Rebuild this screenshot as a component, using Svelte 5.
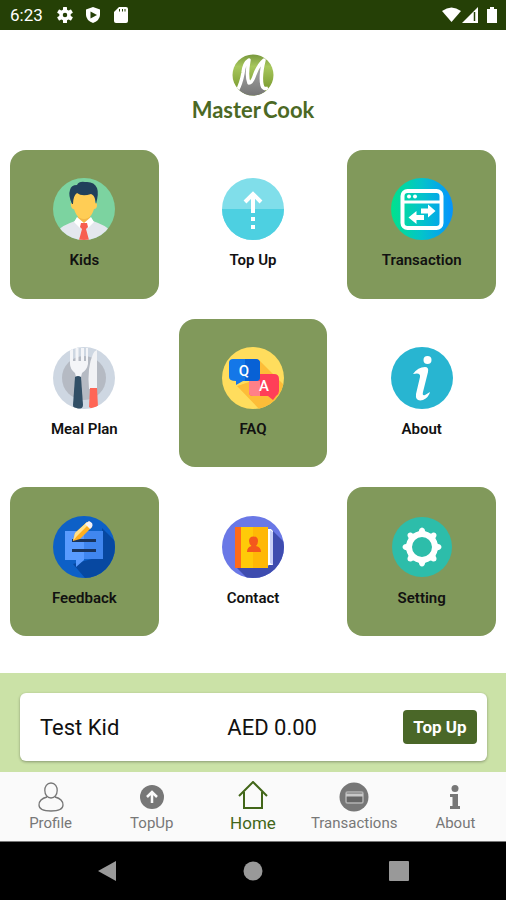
<script>
  const tiles = [
    { id: 'kids', label: 'Kids', filled: true },
    { id: 'topup', label: 'Top Up', filled: false },
    { id: 'transaction', label: 'Transaction', filled: true },
    { id: 'meal', label: 'Meal Plan', filled: false },
    { id: 'faq', label: 'FAQ', filled: true },
    { id: 'about', label: 'About', filled: false },
    { id: 'feedback', label: 'Feedback', filled: true },
    { id: 'contact', label: 'Contact', filled: false },
    { id: 'setting', label: 'Setting', filled: true }
  ];
  const tabs = [
    { id: 'profile', label: 'Profile' },
    { id: 'topup', label: 'TopUp' },
    { id: 'home', label: 'Home' },
    { id: 'transactions', label: 'Transactions' },
    { id: 'about', label: 'About' }
  ];
  const octants = [0, 45, 90, 135, 180, 225, 270, 315];
  const sextants = [0, 60, 120, 180, 240, 300];
  let active = $state('home');
</script>

{#snippet tileIcon(id)}
  <svg class="tile-icon" viewBox="0 0 62 62" aria-hidden="true">
    <defs>
      <clipPath id="clip-{id}"><circle cx="31" cy="31" r="31" /></clipPath>
      <linearGradient id="sweep" x1="0" x2="1" y1="0" y2="0">
        <stop offset="0" stop-color="#00e38c" />
        <stop offset="0.5" stop-color="#04c3cb" />
        <stop offset="1" stop-color="#0593ff" />
      </linearGradient>
    </defs>
    <g clip-path="url(#clip-{id})">
      {#if id === 'kids'}
        <rect width="62" height="62" fill="#7cd3a0" />
        <path d="M6 62V52Q8 48 22 43L31 48L40 43Q54 48 56 52V62Z" fill="#e4e7ee" />
        <path d="M25 36H37V42L31 47L25 42Z" fill="#f3b846" />
        <path d="M20 25Q17 24 18 28Q19 32 21 31Q23 38 27 40Q31 42 35 40Q39 38 41 31Q44 31 44 27Q44 24 42 25V14H20Z" fill="#ffcd55" />
        <path d="M19 26Q15 17 17 12Q18 7 24 7Q26 3 32 4Q41 3 44 10Q46 15 43 26L42 21Q41 17 38 16Q29 19 24 15Q20 18 20 26Z" fill="#21405b" />
        <path d="M24 39L31 45L27 50L21 44ZM38 39L31 45L35 50L41 44Z" fill="#fff" />
        <path d="M28 45H34L35 49L33 51L36 62H26L29 51L27 49Z" fill="#f75e4f" />
      {:else if id === 'topup'}
        <rect width="62" height="62" fill="#80deea" />
        <rect y="31" width="62" height="31" fill="#4dd0e1" />
        <path d="M31 35V15M23 24L31 16L39 24" fill="none" stroke="#fff" stroke-width="4" />
        <path d="M29 39h4v4h-4zM29 47h4v4h-4z" fill="#fff" />
      {:else if id === 'transaction'}
        <rect width="62" height="62" fill="url(#sweep)" />
        <rect x="11.500" y="13" width="39" height="37" rx="5" fill="none" stroke="#fff" stroke-width="4" />
        <path d="M11 24H51" stroke="#fff" stroke-width="3" />
        <circle cx="18" cy="18.500" r="2" fill="#fff" />
        <circle cx="24" cy="18.500" r="2" fill="#fff" />
        <path d="M30 30.500H37V26.500L44.500 33L37 39.500V35.500H30ZM33 37H25.500V33L17.500 39.500L25.500 46V42H33Z" fill="#fff" />
      {:else if id === 'meal'}
        <rect width="62" height="62" fill="#ced7e2" />
        <circle cx="31" cy="31" r="22" fill="#b5bac3" />
        <path d="M17 1h3v13h2.500V1h3v13h2.500V1h3v13h2V1h2V17Q34 23 29 26L28 30H23L22 26Q17 22 17 17Z" fill="#f4f5f8" />
        <path d="M36 42Q34 20 40 7Q41 4 44 3V42Z" fill="#f1f2f5" />
        <path d="M22 30Q25 28 28 30L30 58Q30 62 25 62Q20 62 20 58Z" fill="#314f66" />
        <path d="M37 41H44L45 60Q41 64 36 60Z" fill="#ff6656" />
      {:else if id === 'faq'}
        <rect width="62" height="62" fill="#ffdd5d" />
        <path d="M36 12L62 38V62H37L15 39L30 34Z" fill="#fdbd38" />
        <path d="M31 27H52Q57 27 57 32V44Q57 47 54 49L51 53L46 49H31Q27 49 27 45V32Q27 27 31 27Z" fill="#ff3e58" />
        <path d="M27 34H38V49H31Q27 49 27 45Z" fill="#ff8088" />
        <path d="M11 12H33Q38 12 38 16V30Q38 34 34 34H21L14 38V34Q7 34 7 30V16Q7 12 11 12Z" fill="#1477e8" />
        <path d="M23 12H33Q38 12 38 16V30Q38 34 34 34H23Z" fill="#0861d5" />
        <text x="22" y="29" class="bubble">Q</text>
        <text x="42" y="44" class="bubble">A</text>
      {:else if id === 'about'}
        <rect width="62" height="62" fill="#28b5d1" />
        <circle cx="36.500" cy="13" r="4" fill="#fff" />
        <path d="M22 27Q27 20 34 20Q38 20 37 25L32 45Q31 49 34 48L39 45Q38 50 32 53Q24 55 25 47L29 30Q30 25 22 27Z" fill="#fff" />
      {:else if id === 'feedback'}
        <rect width="62" height="62" fill="#0d60c7" />
        <path d="M49 12L62 25V62H32L20 48L50 40Z" fill="#0748a1" />
        <path d="M12 15H31V44L23 51V44H12Z" fill="#599bff" />
        <path d="M31 15H50V43H31Z" fill="#4086ef" />
        <path d="M19 24.500H43M19 34.500H43" stroke="#19345d" stroke-width="3" />
        <path d="M20 25L22 17L34 6L39 11L27 23Z" fill="#ffae1d" />
        <path d="M20 25L22 17L34 6L36 8L24 20Z" fill="#ffe18b" />
        <path d="M32 8L36 5Q41 7 39 11L37 13Z" fill="#f5f1f5" />
      {:else if id === 'contact'}
        <rect width="62" height="62" fill="#6a78e6" />
        <path d="M49 13L62 26V62H25L15 52L47 50Z" fill="#3e4caf" />
        <path d="M44 13H49L51 15V49H44Z" fill="#fff" />
        <path d="M48 14L51 16V49L48 47Z" fill="#c8cff7" />
        <rect x="13" y="11" width="33" height="41" fill="#ffca08" />
        <rect x="31" y="11" width="15" height="41" fill="#ffb806" />
        <rect x="13" y="11" width="6" height="41" fill="#ff6a1a" />
        <path d="M27 25Q27 20.500 31.500 20.500Q36 20.500 36 25Q36 28 34 30Q39 31 39 36H25Q25 31 29.500 30Q27 28 27 25Z" fill="#f4581c" />
      {:else}
        <circle cx="31" cy="31" r="30" fill="#2dbdaa" />
        <circle cx="31" cy="31" r="13" fill="none" stroke="#fff" stroke-width="6" />
        {#each octants as angle}
          <path d="M26 17.500Q28 16.500 28.500 13Q31 10 33.500 13Q34 16.500 36 17.500Z" fill="#fff" transform="rotate({angle} 31 31)" />
        {/each}
      {/if}
    </g>
  </svg>
{/snippet}

{#snippet tabIcon(id)}
  <svg class="tab-icon" viewBox="0 0 32 32" aria-hidden="true">
    {#if id === 'profile'}
      <path d="M16 2C7.500 2 8 17 16 17C24 17 24.500 2 16 2ZM12 16Q4 18 4 24Q4 30 16 30Q28 30 28 24Q28 18 20 16" fill="none" stroke="currentColor" stroke-width="1.300" />
    {:else if id === 'topup'}
      <circle cx="16" cy="16" r="12" fill="currentColor" />
      <path d="M16 22V12M11 16L16 11L21 16" fill="none" stroke="#fafafa" stroke-width="2.500" />
    {:else if id === 'home'}
      <path d="M2 15L16 1L30 15M7 11V27H25V11" fill="none" stroke="currentColor" stroke-width="2" />
    {:else if id === 'transactions'}
      <circle cx="16" cy="16" r="14.500" fill="currentColor" />
      <rect x="8" y="11" width="17" height="11" rx="1.500" fill="#666" stroke="#b2b2b2" stroke-width="1.500" />
      <path d="M8 14H25" stroke="#c8c8c8" stroke-width="3" />
    {:else}
      <circle cx="16" cy="7.500" r="3.500" fill="currentColor" />
      <path d="M11 13H19V25H21V28H11V25H13.500V16H11Z" fill="currentColor" />
    {/if}
  </svg>
{/snippet}

<div class="app">
  <div class="status">
    <span class="clock">6:23</span>
    <svg class="status-icon" viewBox="0 0 16 16" aria-hidden="true">
      <circle cx="8" cy="8" r="4" fill="none" stroke="#fff" stroke-width="3.500" />
      {#each sextants as angle}
        <rect x="6" y="0" width="4" height="4" rx="0.500" fill="#fff" transform="rotate({angle} 8 8)" />
      {/each}
    </svg>
    <svg class="status-icon" viewBox="0 0 16 16" aria-hidden="true">
      <path d="M8 0L15 2.500V8Q15 13 8 16Q1 13 1 8V2.500Z" fill="#fff" />
      <path d="M5.500 4.500L12 8L5.500 11.500Z" fill="#254006" />
    </svg>
    <svg class="status-icon" viewBox="0 0 16 16" aria-hidden="true">
      <path d="M6 0H13Q15 0 15 2V14Q15 16 13 16H3Q1 16 1 14V5Z" fill="#fff" />
      <path d="M6.500 2V4.500M9.500 2V4.500M12 2V4.500" stroke="#254006" stroke-width="1" />
    </svg>
    <svg class="signals" viewBox="0 0 56 18" aria-hidden="true">
      <path d="M0 5Q9.500 -2 19 5L9.500 16Z" fill="#fff" />
      <path d="M36 1V17H20Z" fill="#fff" />
      <path d="M32.500 6V15" stroke="#254006" stroke-width="1.500" />
      <path d="M46 3H48V1H52V3H55V17H45V3Z" fill="#fff" />
    </svg>
  </div>

  <header class="brand">
    <svg class="emblem" viewBox="0 0 42 42" aria-hidden="true">
      <defs>
        <linearGradient id="leaf" x1="0" y1="0" x2="0" y2="1">
          <stop offset="0" stop-color="#76963c" />
          <stop offset="0.300" stop-color="#a7c75c" />
          <stop offset="1" stop-color="#6f8f24" />
        </linearGradient>
        <linearGradient id="steel" x1="0" y1="0" x2="0" y2="1">
          <stop offset="0" stop-color="#ababab" />
          <stop offset="1" stop-color="#757575" />
        </linearGradient>
        <clipPath id="disc"><circle cx="21" cy="21" r="20.500" /></clipPath>
      </defs>
      <g clip-path="url(#disc)">
        <rect width="42" height="42" fill="url(#leaf)" />
        <path d="M4 42L7 34Q11 20 14 10L17 29L20 29L30 10L31 30L35 42Z" fill="url(#steel)" />
        <path d="M5 37Q9 30 11 19Q12 9 17 6Q14 22 17 29Q20 29 23 20Q27 10 32 6Q28 22 30 31Q31 36 36 34" fill="none" stroke="#fff" stroke-width="3.500" stroke-linejoin="round" />
      </g>
    </svg>
    <h1>Master<span>Cook</span></h1>
  </header>

  <main class="tiles">
    {#each tiles as tile}
      <button type="button" class="tile" class:filled={tile.filled}>
        {@render tileIcon(tile.id)}
        <span>{tile.label}</span>
      </button>
    {/each}
  </main>

  <section class="balance">
    <div class="account">
      <span>Test Kid</span>
      <span>AED 0.00</span>
      <button type="button" class="pay">Top Up</button>
    </div>
  </section>

  <nav class="tabs">
    {#each tabs as tab}
      <a href="#{tab.id}" class:active={active === tab.id} onclick={() => (active = tab.id)}>
        {@render tabIcon(tab.id)}
        <span>{tab.label}</span>
      </a>
    {/each}
  </nav>

  <div class="system">
    <button type="button" aria-label="Back">
      <svg viewBox="0 0 20 20"><path d="M1 10L19 0V20Z" fill="#999" /></svg>
    </button>
    <button type="button" aria-label="Home">
      <svg viewBox="0 0 20 20"><circle cx="10" cy="10" r="9.500" fill="#999" /></svg>
    </button>
    <button type="button" aria-label="Recent apps">
      <svg viewBox="0 0 20 20"><rect width="20" height="20" rx="1" fill="#999" /></svg>
    </button>
  </div>
</div>

<style>
  :global(body) {
    margin: 0;
    background: #fff;
  }
  .app {
    display: flex;
    flex-direction: column;
    min-height: 100vh;
    font-family: Roboto, "Liberation Sans", sans-serif;
    color: #111;
  }
  button {
    margin: 0;
    padding: 0;
    border: 0;
    background: none;
    font: inherit;
    color: inherit;
    cursor: pointer;
  }
  .status {
    display: flex;
    align-items: center;
    gap: 12px;
    height: 30px;
    padding: 0 8px 0 10px;
    background: #254006;
    color: #fff;
  }
  .clock {
    margin-right: 2px;
    font-size: 17px;
    line-height: 30px;
  }
  .status-icon {
    width: 16px;
    height: 16px;
  }
  .signals {
    width: 56px;
    height: 18px;
    margin-left: auto;
  }
  .brand {
    display: flex;
    flex-direction: column;
    align-items: center;
    padding: 24px 0 26px;
  }
  .emblem {
    width: 42px;
    height: 42px;
  }
  h1 {
    display: flex;
    gap: 2px;
    margin: 0;
    font-family: Lato, "Open Sans", sans-serif;
    font-size: 22px;
    font-weight: 700;
    line-height: 28px;
    color: #4c6924;
  }
  .tiles {
    display: grid;
    grid-template-columns: repeat(3, 1fr);
    gap: 20px;
    padding: 0 10px;
  }
  .tile {
    display: flex;
    flex-direction: column;
    align-items: center;
    justify-content: center;
    gap: 10px;
    aspect-ratio: 1;
    border-radius: 16px;
    font-size: 15px;
    font-weight: 600;
    line-height: 20px;
  }
  .filled {
    background: #81995b;
  }
  .tile-icon {
    width: 62px;
    height: 62px;
  }
  .bubble {
    font: 500 15px Roboto, sans-serif;
    fill: #fff;
    text-anchor: middle;
  }
  .balance {
    margin-top: auto;
    padding: 20px 19px 11px 20px;
    background: #cbe2a7;
  }
  .account {
    display: grid;
    grid-template-columns: 3fr 2fr 2fr;
    align-items: center;
    height: 68px;
    padding: 0 10px 0 20px;
    border-radius: 6px;
    background: #fff;
    box-shadow: 0 1px 3px #0005;
    font-size: 22px;
  }
  .pay {
    justify-self: end;
    width: 74px;
    height: 34px;
    border-radius: 4px;
    background: #4a6728;
    color: #fff;
    font-size: 17px;
    font-weight: 700;
  }
  .tabs {
    display: grid;
    grid-template-columns: repeat(5, 1fr);
    height: 69px;
    background: #fafafa;
    border-bottom: 1px solid #777;
  }
  .tabs a {
    display: flex;
    flex-direction: column;
    align-items: center;
    padding-top: 9px;
    color: #777;
    font-size: 15px;
    line-height: 20px;
    text-decoration: none;
  }
  .tabs .active {
    color: #426619;
    font-size: 17px;
  }
  .tab-icon {
    width: 32px;
    height: 32px;
  }
  .system {
    display: flex;
    align-items: center;
    justify-content: space-around;
    height: 58px;
    padding: 0 34px;
    background: #000;
  }
  .system button {
    display: flex;
  }
  .system svg {
    width: 20px;
    height: 20px;
  }
</style>
